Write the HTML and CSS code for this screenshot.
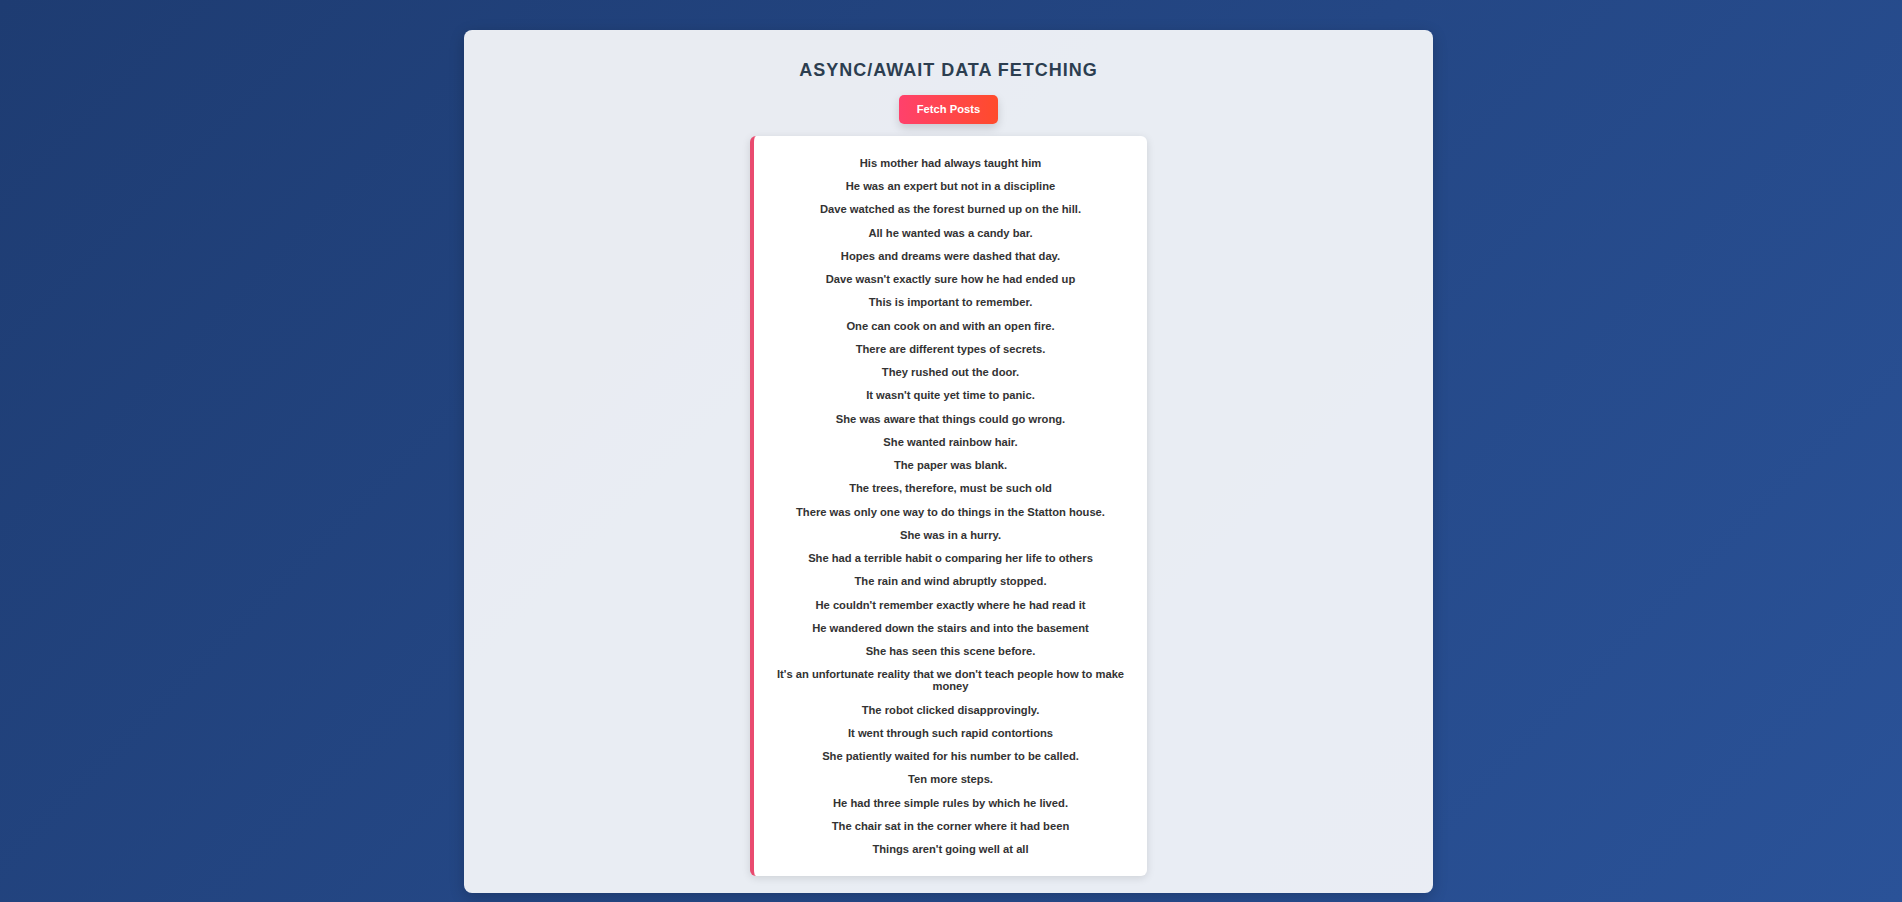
FILE: index.html
```html
<!DOCTYPE html>
<html lang="en">
<head>
<meta charset="utf-8">
<title>Async/Await Data Fetching</title>
<link rel="stylesheet" href="styles.css">
</head>
<body>
<main class="app">
  <h1 class="title">ASYNC/AWAIT DATA FETCHING</h1>
  <button class="fetch-btn" type="button">Fetch Posts</button>
  <section class="posts">
    <p class="post">His mother had always taught him</p>
    <p class="post">He was an expert but not in a discipline</p>
    <p class="post">Dave watched as the forest burned up on the hill.</p>
    <p class="post">All he wanted was a candy bar.</p>
    <p class="post">Hopes and dreams were dashed that day.</p>
    <p class="post">Dave wasn't exactly sure how he had ended up</p>
    <p class="post">This is important to remember.</p>
    <p class="post">One can cook on and with an open fire.</p>
    <p class="post">There are different types of secrets.</p>
    <p class="post">They rushed out the door.</p>
    <p class="post">It wasn't quite yet time to panic.</p>
    <p class="post">She was aware that things could go wrong.</p>
    <p class="post">She wanted rainbow hair.</p>
    <p class="post">The paper was blank.</p>
    <p class="post">The trees, therefore, must be such old</p>
    <p class="post">There was only one way to do things in the Statton house.</p>
    <p class="post">She was in a hurry.</p>
    <p class="post">She had a terrible habit o comparing her life to others</p>
    <p class="post">The rain and wind abruptly stopped.</p>
    <p class="post">He couldn't remember exactly where he had read it</p>
    <p class="post">He wandered down the stairs and into the basement</p>
    <p class="post">She has seen this scene before.</p>
    <p class="post">It's an unfortunate reality that we don't teach people how to make money</p>
    <p class="post">The robot clicked disapprovingly.</p>
    <p class="post">It went through such rapid contortions</p>
    <p class="post">She patiently waited for his number to be called.</p>
    <p class="post">Ten more steps.</p>
    <p class="post">He had three simple rules by which he lived.</p>
    <p class="post">The chair sat in the corner where it had been</p>
    <p class="post">Things aren't going well at all</p>
  </section>
</main>
</body>
</html>
```
FILE: styles.css
```css
html {
  min-height: 100%;
  background: linear-gradient(135deg, #1e3c72 0%, #2a5298 100%);
}

body {
  margin: 0;
  padding: 30px 5px 9px 0;
  min-height: 100vh;
  box-sizing: border-box;
  font-family: "Liberation Sans", Arial, sans-serif;
}

.app {
  width: 969px;
  margin: 0 auto;
  box-sizing: border-box;
  padding: 16px 16px 17px;
  background: rgba(255, 255, 255, 0.9);
  border-radius: 8px;
  box-shadow: 0 4px 15px rgba(0, 0, 0, 0.2);
  display: flex;
  flex-direction: column;
  align-items: center;
}

.title {
  margin: 13.5px 0 14px;
  font-size: 18px;
  line-height: normal;
  font-weight: 700;
  letter-spacing: 1px;
  color: #2c3e50;
  text-align: center;
}

.fetch-btn {
  font-family: "Liberation Sans", Arial, sans-serif;
  font-size: 11.2px;
  font-weight: 700;
  line-height: normal;
  color: #ffffff;
  border: none;
  border-radius: 5px;
  padding: 8.5px 18px;
  margin: 0 0 12px;
  background: linear-gradient(90deg, #ff416c, #ff4b2b);
  box-shadow: 0 4px 10px rgba(0, 0, 0, 0.15);
  cursor: pointer;
}

.posts {
  width: 397px;
  box-sizing: border-box;
  padding: 10px;
  background: #ffffff;
  border-left: 4px solid #e94b6f;
  border-radius: 6px;
  box-shadow: 0 2px 8px rgba(0, 0, 0, 0.12);
  display: flow-root;
}

.post {
  margin: 11.25px 0;
  font-size: 11.2px;
  line-height: 12px;
  font-weight: 700;
  color: #333333;
  text-align: center;
}
```
